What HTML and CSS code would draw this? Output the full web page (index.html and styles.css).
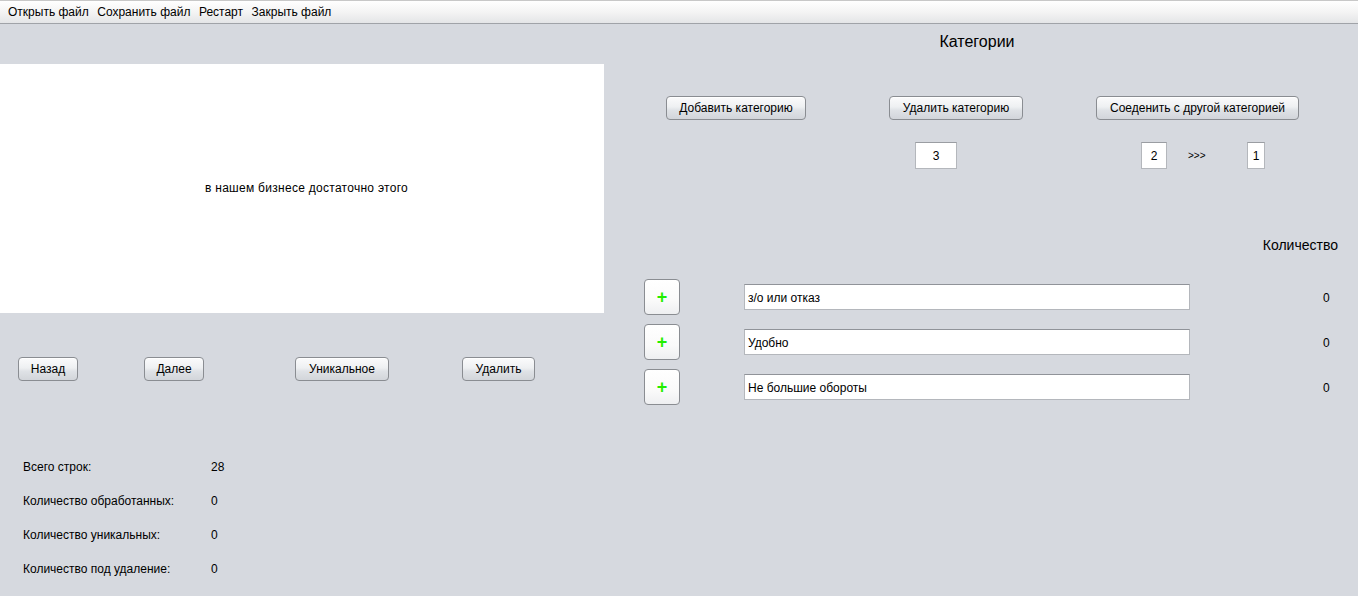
FILE: index.html
```html
<!DOCTYPE html>
<html lang="ru">
<head>
<meta charset="utf-8">
<title>Категории</title>
<link rel="stylesheet" href="styles.css">
</head>
<body>
<div class="menubar">
  <span class="menu-item">Открыть файл</span>
  <span class="menu-item">Сохранить файл</span>
  <span class="menu-item">Рестарт</span>
  <span class="menu-item">Закрыть файл</span>
</div>
<div class="main">
  <div class="left">
    <div class="textarea">в нашем бизнесе достаточно этого</div>
    <div class="nav-row">
      <button class="btn b-back">Назад</button>
      <button class="btn b-next">Далее</button>
      <button class="btn b-uniq">Уникальное</button>
      <button class="btn b-del">Удалить</button>
    </div>
    <div class="stats">
      <span>Всего строк:</span><span>28</span>
      <span>Количество обработанных:</span><span>0</span>
      <span>Количество уникальных:</span><span>0</span>
      <span>Количество под удаление:</span><span>0</span>
    </div>
  </div>
  <div class="right">
    <div class="title">Категории</div>
    <div class="cat-buttons">
      <button class="btn b-add">Добавить категорию</button>
      <button class="btn b-remove">Удалить категорию</button>
      <button class="btn b-merge">Соеденить с другой категорией</button>
    </div>
    <div class="cat-inputs">
      <div class="field f-three">3</div>
      <div class="field f-two">2</div>
      <span class="arrows">&gt;&gt;&gt;</span>
      <div class="field f-one">1</div>
    </div>
    <div class="count-head">Количество</div>
    <div class="rows">
      <div class="row">
        <button class="plus">+</button>
        <div class="text-field">з/о или отказ</div>
        <span class="count">0</span>
      </div>
      <div class="row">
        <button class="plus">+</button>
        <div class="text-field">Удобно</div>
        <span class="count">0</span>
      </div>
      <div class="row">
        <button class="plus">+</button>
        <div class="text-field">Не большие обороты</div>
        <span class="count">0</span>
      </div>
    </div>
  </div>
</div>
</body>
</html>
```

FILE: styles.css
```css
* { box-sizing: border-box; }
html, body {
  margin: 0;
  padding: 0;
  width: 1358px;
  height: 596px;
  overflow: hidden;
  background: #d6d9df;
  font-family: "Liberation Sans", Arial, sans-serif;
  font-size: 12px;
  color: #000;
}
.menubar {
  height: 24px;
  border-top: 1px solid #c8c8c8;
  border-bottom: 1px solid #a0a3a8;
  background: linear-gradient(#ffffff, #f4f4f4 50%, #e4e5e7);
  display: flex;
  align-items: center;
  padding-left: 8px;
  gap: 8.5px;
}
.menu-item { line-height: 20px; }

.main {
  display: flex;
}
.left {
  width: 604px;
  flex: none;
}
.textarea {
  margin-top: 40px;
  height: 249px;
  background: #fff;
  display: flex;
  align-items: center;
  justify-content: center;
  padding-bottom: 2px;
  padding-left: 9px;
  letter-spacing: 0.28px;
}
.btn {
  font-family: "Liberation Sans", Arial, sans-serif;
  font-size: 12px;
  color: #000;
  height: 24px;
  padding: 0;
  border: 1px solid #8a8d92;
  border-radius: 4px;
  background: linear-gradient(#fbfbfc, #eef0f2 45%, #dfe2e6 60%, #d2d5da);
  box-shadow: inset 0 1px 0 #fff;
}
.nav-row {
  display: flex;
  margin-top: 44px;
  padding-left: 18px;
}
.b-back { width: 60px; }
.b-next { width: 60px; margin-left: 66px; }
.b-uniq { width: 94px; margin-left: 91px; }
.b-del { width: 73px; margin-left: 73px; }

.stats {
  display: grid;
  grid-template-columns: 188px auto;
  grid-auto-rows: 34px;
  margin-top: 78px;
  padding-left: 23px;
  line-height: 16px;
}

.right {
  flex: 1;
}
.title {
  margin-top: 8px;
  font-size: 16px;
  line-height: 20px;
  text-align: center;
  padding-right: 8px;
}
.cat-buttons {
  display: flex;
  margin-top: 44px;
  padding-left: 62px;
}
.b-add { width: 140px; }
.b-remove { width: 134px; margin-left: 83px; }
.b-merge { width: 203px; margin-left: 73px; }

.cat-inputs {
  display: flex;
  align-items: center;
  margin-top: 22px;
  padding-left: 311px;
  height: 27px;
}
.field {
  height: 27px;
  background: #fff;
  border: 1px solid #b4b7bc;
  border-top-color: #9a9da2;
  display: flex;
  align-items: center;
  justify-content: center;
  font-size: 12px;
  padding-top: 1px;
}
.f-three { width: 42px; }
.f-two { width: 26px; margin-left: 184px; }
.arrows { margin-left: 21px; font-size: 10px; width: 59px; }
.f-one { width: 18px; }

.count-head {
  margin-top: 67px;
  font-size: 14px;
  line-height: 18px;
  text-align: right;
  padding-right: 20px;
}
.rows {
  margin-top: 25px;
  display: flex;
  flex-direction: column;
  gap: 9px;
}
.row {
  display: flex;
  align-items: center;
  height: 36px;
  padding-left: 40px;
}
.plus {
  width: 36px;
  height: 36px;
  padding: 0;
  border: 1px solid #8a8d92;
  border-radius: 4px;
  background: linear-gradient(#ffffff, #fafafa 60%, #eeeff1);
  color: #22ee00;
  font-family: "Liberation Sans", Arial, sans-serif;
  font-weight: bold;
  font-size: 18px;
  line-height: 18px;
}
.text-field {
  margin-left: 64px;
  width: 446px;
  height: 26px;
  background: #fff;
  border: 1px solid #b4b7bc;
  border-top-color: #909399;
  display: flex;
  align-items: center;
  padding-left: 3px;
  padding-top: 2px;
}
.count {
  margin-left: 133px;
  width: 6px;
  text-align: center;
  padding-top: 2px;
}
```
